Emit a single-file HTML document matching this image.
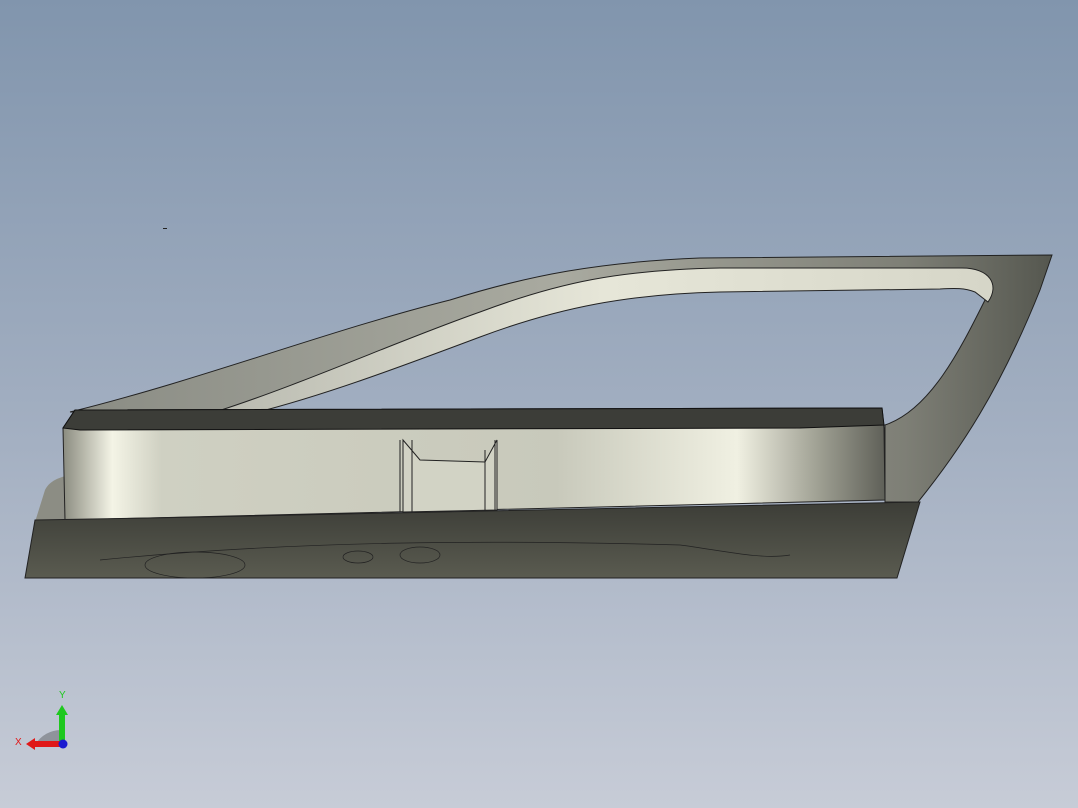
<!DOCTYPE html><html><head><style>html,body{margin:0;padding:0;width:1078px;height:808px;overflow:hidden}
body{background:linear-gradient(#8195ad 0%,#a4b0c2 55%,#c7ccd7 100%)}</style></head><body>
<svg width="1078" height="808" viewBox="0 0 1078 808" style="position:absolute;left:0;top:0">
<defs>
<linearGradient id="fr" x1="0" y1="0" x2="1" y2="0"><stop offset="0" stop-color="#8a8c84"/><stop offset=".5" stop-color="#a9aaa0"/><stop offset=".85" stop-color="#7e7f76"/><stop offset="1" stop-color="#55574f"/></linearGradient>
<linearGradient id="inn" x1="0" y1="0" x2="1" y2="0"><stop offset="0" stop-color="#b9bab0"/><stop offset=".5" stop-color="#e6e6d8"/><stop offset="1" stop-color="#d6d6c8"/></linearGradient>
<linearGradient id="box" x1="0" y1="0" x2="1" y2="0"><stop offset="0" stop-color="#8b8c80"/><stop offset=".06" stop-color="#f4f4e6"/><stop offset=".12" stop-color="#cfd0c2"/><stop offset=".6" stop-color="#c8c9bb"/><stop offset=".82" stop-color="#f0f0e2"/><stop offset=".92" stop-color="#9e9f92"/><stop offset="1" stop-color="#5f6058"/></linearGradient>
<linearGradient id="sill" x1="0" y1="0" x2="0" y2="1"><stop offset="0" stop-color="#3c3d37"/><stop offset="1" stop-color="#5a5b50"/></linearGradient>
</defs>
<path d="M70 412 C200 380 330 330 450 300 C530 275 600 262 700 258 L1052 255 L1040 290 C1000 390 960 450 918 502 L885 502 L885 425 C930 410 960 350 985 300 C995 285 985 272 962 272 L720 274 C620 276 560 290 480 320 C400 350 300 385 232 410 Z" fill="url(#fr)" stroke="#222" stroke-width="1"/>
<path d="M215 412 C300 385 400 340 480 312 C560 282 620 270 720 268 L962 268 C990 268 1000 285 988 302 L975 292 C965 288 955 288 940 289 L720 292 C630 294 560 307 480 337 C400 367 320 397 250 414 Z" fill="url(#inn)" stroke="#222" stroke-width="1"/>
<path d="M45 490 C50 480 60 478 65 476 L65 520 L35 522 Z" fill="#8c8d84"/>
<path d="M75 410 L882 408 L884 428 L885 500 L65 520 L63 428 Z" fill="url(#box)" stroke="#222" stroke-width="1"/>
<path d="M75 410 L882 408 L884 425 L800 428 L80 430 L63 428 Z" fill="#3c3d38" stroke="#111" stroke-width="1"/>
<path d="M403 440 L420 460 L485 462 L497 440 L497 510 L403 512 Z" fill="#d2d3c5" stroke="#222" stroke-width="1"/>
<path d="M400 440 L400 512 M412 440 L412 512 M485 450 L485 512 M495 440 L495 512" stroke="#222" stroke-width="1"/>
<path d="M35 520 L150 518 L920 502 L897 578 L25 578 Z" fill="url(#sill)" stroke="#222" stroke-width="1"/>
<g fill="none" stroke="#222" stroke-width=".7">
<ellipse cx="195" cy="565" rx="50" ry="13"/><ellipse cx="358" cy="557" rx="15" ry="6"/><ellipse cx="420" cy="555" rx="20" ry="8"/>
<path d="M100 560 C300 540 500 540 680 545 C720 550 760 560 790 555"/>
</g>
<path d="M62 745 L62 730 A30 30 0 0 0 35 745 Z" fill="#8f939b"/>
<rect x="59" y="713" width="6" height="32" fill="#1ec81e"/><path d="M56 715 L62 705 L68 715 Z" fill="#1ec81e"/>
<rect x="33" y="741" width="29" height="6" fill="#e01818"/><path d="M35 738 L26 744 L35 750 Z" fill="#e01818"/>
<circle cx="63" cy="744" r="4.5" fill="#1a1ad0"/>
<text x="59" y="698" font-family="Liberation Sans,sans-serif" font-size="10" fill="#1ec81e">Y</text>
<text x="15" y="745" font-family="Liberation Sans,sans-serif" font-size="10" fill="#e01818">X</text>
<rect x="163" y="228" width="4" height="1" fill="#222"/>
</svg></body></html>
